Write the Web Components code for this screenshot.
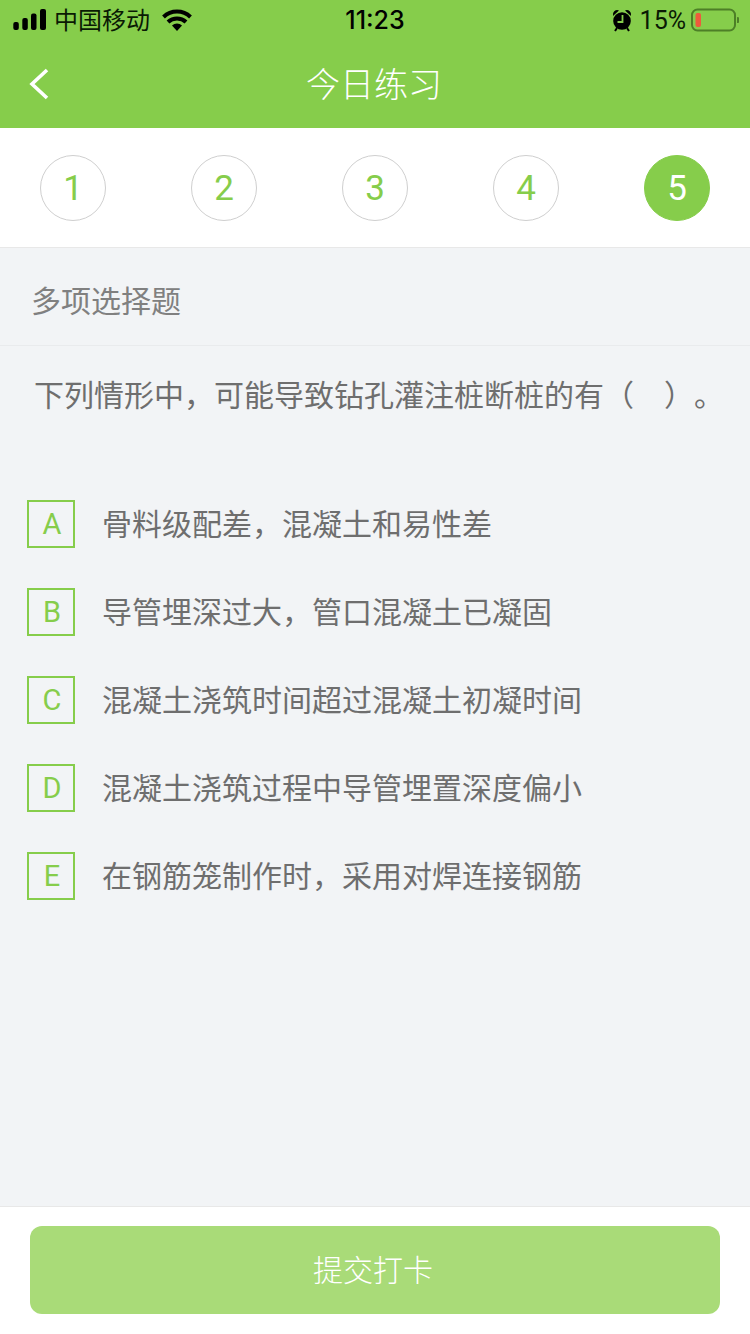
<!DOCTYPE html>
<html lang="zh">
<head>
<meta charset="utf-8">
<title>今日练习</title>
<style>
  html, body { margin: 0; height: 100%; }
  body {
    font-family: "Noto Sans CJK SC", "Liberation Sans", sans-serif;
    background: #f2f4f6;
  }
</style>
</head>
<body>
<practice-page></practice-page>
<script>
const GREEN = '#86cd4b';

class StatusBar extends HTMLElement {
  constructor() {
    super();
    this.attachShadow({ mode: 'open' }).innerHTML = `
      <style>
        :host { display: grid; grid-template-columns: 1fr auto 1fr; align-items: center; height: 40px; padding: 0 13px; color: #0a1a04; font-size: 24px; }
        .left { display: flex; align-items: center; }
        .carrier { margin-left: 7px; line-height: 38px; padding-bottom: 2px; }
        .wifi { margin-left: 12px; }
        .time { font: 500 25px Inter, "Liberation Sans", sans-serif; color: #000; }
        .right { display: flex; align-items: center; justify-content: flex-end; }
        .pct { font: 25px Roboto, "Liberation Sans", sans-serif; margin-left: 7px; }
        .batt { margin-left: 5px; margin-right: -2px; }
      </style>
      <div class="left">
        <svg width="34" height="22" viewBox="0 0 34 22">
          <rect x="0.300" y="13" width="5.500" height="8" rx="2" fill="#000"/>
          <rect x="9.300" y="9" width="5.500" height="12" rx="2" fill="#000"/>
          <rect x="18" y="4.500" width="5.500" height="16.500" rx="2" fill="#000"/>
          <rect x="27" y="0" width="6" height="21" rx="2" fill="#000"/>
        </svg>
        <span class="carrier">中国移动</span>
        <svg class="wifi" width="30" height="22" viewBox="0 0 30 22">
          <path d="M1.500 8a19.500 19.500 0 0 1 27 0M6 13a13 13 0 0 1 18 0" fill="none" stroke="#000" stroke-width="4"/>
          <path d="M10 16.500a7.500 7.500 0 0 1 10 0L15 22z" fill="#000"/>
        </svg>
      </div>
      <div class="time">11:23</div>
      <div class="right">
        <svg width="22" height="24" viewBox="0 0 22 24">
          <circle cx="11" cy="13" r="8.800" fill="#000"/>
          <path d="M2 8a4.500 4.500 0 0 1 6-5.500zM20 8a4.500 4.500 0 0 0-6-5.500z" fill="#000"/>
          <path d="M6 20l-2 3M16 20l2 3" stroke="#000" stroke-width="2"/>
          <path d="M11.500 7v7H6.500" fill="none" stroke="${GREEN}" stroke-width="1.800"/>
        </svg>
        <span class="pct">15%</span>
        <svg class="batt" width="48" height="24" viewBox="0 0 48 24">
          <rect x="1" y="1.500" width="43" height="21" rx="5.500" fill="none" stroke="#4d7f27" stroke-width="2"/>
          <rect x="4.500" y="5" width="5.500" height="14" rx="2" fill="#ee5a3c"/>
          <path d="M46 9a3 3 0 0 1 0 6z" fill="#4d7f27"/>
        </svg>
      </div>
    `;
  }
}

class NavBar extends HTMLElement {
  constructor() {
    super();
    this.attachShadow({ mode: 'open' }).innerHTML = `
      <style>
        :host { display: flex; align-items: center; justify-content: center; position: relative; box-sizing: border-box; height: 88px; padding: 0 2px 4px 0; color: #fff; font-size: 34px; font-weight: 300; }
        svg { position: absolute; left: 28px; top: 27px; }
      </style>
      <svg width="22" height="34" viewBox="0 0 22 34"><path d="M19 3 4 17l15 14" fill="none" stroke="#fff" stroke-width="3.600"/></svg>
      <slot></slot>
    `;
  }
}

class StepItem extends HTMLElement {
  constructor() {
    super();
    this.attachShadow({ mode: 'open' }).innerHTML = `
      <style>
        :host { display: flex; align-items: center; justify-content: center; box-sizing: border-box; width: 66px; height: 66px; padding-top: 1px; border: 1px solid #cfcfcf; border-radius: 50%; color: ${GREEN}; font: 35px Roboto, "Liberation Sans", sans-serif; background: #fff; }
        :host([active]) { background: ${GREEN}; border-color: ${GREEN}; color: #fff; }
      </style>
      <slot></slot>
    `;
  }
}

class StepBar extends HTMLElement {
  constructor() {
    super();
    this.attachShadow({ mode: 'open' }).innerHTML = `
      <style>
        :host { display: flex; justify-content: space-between; align-items: center; height: 119px; padding: 0 40px; background: #fff; border-bottom: 1px solid #e8e8e8; }
      </style>
      <slot></slot>
    `;
  }
}

class OptionRow extends HTMLElement {
  constructor() {
    super();
    this.attachShadow({ mode: 'open' }).innerHTML = `
      <style>
        :host { display: flex; align-items: center; gap: 27px; height: 48px; color: #6e6e6e; font-size: 30px; }
        .key { display: flex; align-items: center; justify-content: center; box-sizing: border-box; width: 48px; height: 48px; padding-left: 2px; border: 2px solid ${GREEN}; color: ${GREEN}; font: 29px Roboto, "Liberation Sans", sans-serif; }
        slot { display: block; margin-top: -4px; }
      </style>
      <div class="key">${this.getAttribute('key')}</div>
      <slot></slot>
    `;
  }
}

class PracticePage extends HTMLElement {
  constructor() {
    super();
    this.attachShadow({ mode: 'open' }).innerHTML = `
      <style>
        :host { display: flex; flex-direction: column; height: 1334px; background: #f2f4f6; overflow: hidden; }
        header { background: ${GREEN}; }
        .kind { height: 98px; line-height: 102px; padding-left: 31px; box-sizing: border-box; border-bottom: 1px solid #e9ebed; color: #808080; font-size: 30px; }
        .question { margin: 0; padding: 23px 0 0 34px; height: 154px; box-sizing: border-box; color: #6e6e6e; font-size: 30px; line-height: 48px; white-space: pre; text-spacing-trim: space-all; }
        .options { flex: 1; display: flex; flex-direction: column; gap: 40px; padding-left: 27px; }
        footer { height: 128px; box-sizing: border-box; padding: 19px 30px 0; background: #fff; border-top: 1px solid #e8e8e8; }
        .submit { display: flex; align-items: center; justify-content: center; box-sizing: border-box; height: 88px; padding: 0 4px 4px 0; border-radius: 12px; background: #a9db78; color: #fff; font-size: 30px; font-weight: 300; }
      </style>
      <header>
        <status-bar></status-bar>
        <nav-bar>今日练习</nav-bar>
      </header>
      <step-bar>
        <step-item>1</step-item>
        <step-item>2</step-item>
        <step-item>3</step-item>
        <step-item>4</step-item>
        <step-item active>5</step-item>
      </step-bar>
      <div class="kind">多项选择题</div>
      <p class="question">下列情形中，可能导致钻孔灌注桩断桩的有（　）。</p>
      <div class="options">
        <option-row key="A">骨料级配差，混凝土和易性差</option-row>
        <option-row key="B">导管埋深过大，管口混凝土已凝固</option-row>
        <option-row key="C">混凝土浇筑时间超过混凝土初凝时间</option-row>
        <option-row key="D">混凝土浇筑过程中导管埋置深度偏小</option-row>
        <option-row key="E">在钢筋笼制作时，采用对焊连接钢筋</option-row>
      </div>
      <footer><div class="submit">提交打卡</div></footer>
    `;
  }
}

customElements.define('status-bar', StatusBar);
customElements.define('nav-bar', NavBar);
customElements.define('step-item', StepItem);
customElements.define('step-bar', StepBar);
customElements.define('option-row', OptionRow);
customElements.define('practice-page', PracticePage);
</script>
</body>
</html>
